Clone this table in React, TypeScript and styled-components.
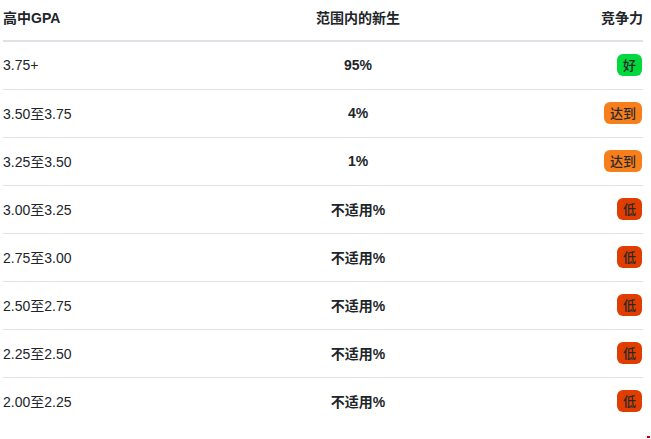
import React from "react";
import styled, { createGlobalStyle } from "styled-components";

const Global = createGlobalStyle`
  html, body { margin: 0; padding: 0; background: #ffffff; }
  body {
    font-family: "Liberation Sans", "Noto Sans CJK SC", sans-serif;
    color: #212529;
  }
`;

const Page = styled.div`
  width: 651px;
  height: 439px;
  position: relative;
  overflow: hidden;
  padding: 0 8px 0 3px;
  box-sizing: border-box;
`;

const Table = styled.div`
  width: 640px;
  display: flex;
  flex-direction: column;
`;

const HeadRow = styled.div`
  display: grid;
  grid-template-columns: 295px 120px 1fr;
  align-items: center;
  height: 42px;
  padding-bottom: 7px;
  box-sizing: border-box;
  border-bottom: 2px solid #dee2e6;
`;

const Row = styled.div<{ $last?: boolean }>`
  display: grid;
  grid-template-columns: 295px 120px 1fr;
  align-items: center;
  height: 47px;
  padding-bottom: 2px;
  box-sizing: border-box;
  height: 48px;
  border-bottom: ${(p) => (p.$last ? "1px solid transparent" : "1px solid #e2e2e2")};
`;

const Cell = styled.div<{ $align?: "left" | "center" | "right"; $bold?: boolean }>`
  font-size: 14px;
  font-weight: ${(p) => (p.$bold ? 700 : 400)};
  color: #212529;
  white-space: nowrap;
  display: flex;
  justify-content: ${(p) =>
    p.$align === "center" ? "center" : p.$align === "right" ? "flex-end" : "flex-start"};
`;

const HeadCell = styled(Cell)`
  font-weight: 700;
`;

const Badge = styled.span<{ $tone: "good" | "meet" | "low" }>`
  display: inline-flex;
  align-items: center;
  justify-content: center;
  height: 22px;
  padding: 0 6px;
  border-radius: 6px;
  font-size: 13px;
  font-weight: 500;
  color: #2a2a2a;
  margin-right: 1px;
  background: ${(p) =>
    p.$tone === "good" ? "#00d83b" : p.$tone === "meet" ? "#f67f1c" : "#e03d00"};
`;

const Mark = styled.span`
  position: absolute;
  right: 1px;
  bottom: 1px;
  width: 3px;
  height: 2px;
  background: #c00000;
`;

type Tone = "good" | "meet" | "low";
const rows: { gpa: string; pct: string; label: string; tone: Tone }[] = [
  { gpa: "3.75+", pct: "95%", label: "好", tone: "good" },
  { gpa: "3.50至3.75", pct: "4%", label: "达到", tone: "meet" },
  { gpa: "3.25至3.50", pct: "1%", label: "达到", tone: "meet" },
  { gpa: "3.00至3.25", pct: "不适用%", label: "低", tone: "low" },
  { gpa: "2.75至3.00", pct: "不适用%", label: "低", tone: "low" },
  { gpa: "2.50至2.75", pct: "不适用%", label: "低", tone: "low" },
  { gpa: "2.25至2.50", pct: "不适用%", label: "低", tone: "low" },
  { gpa: "2.00至2.25", pct: "不适用%", label: "低", tone: "low" },
];

export default function App() {
  return (
    <Page>
      <Global />
      <Table>
        <HeadRow>
          <HeadCell>高中GPA</HeadCell>
          <HeadCell $align="center">范围内的新生</HeadCell>
          <HeadCell $align="right">竞争力</HeadCell>
        </HeadRow>
        {rows.map((r, i) => (
          <Row key={i} $last={i === rows.length - 1}>
            <Cell>{r.gpa}</Cell>
            <Cell $align="center" $bold>
              {r.pct}
            </Cell>
            <Cell $align="right">
              <Badge $tone={r.tone}>{r.label}</Badge>
            </Cell>
          </Row>
        ))}
      </Table>
      <Mark />
    </Page>
  );
}
